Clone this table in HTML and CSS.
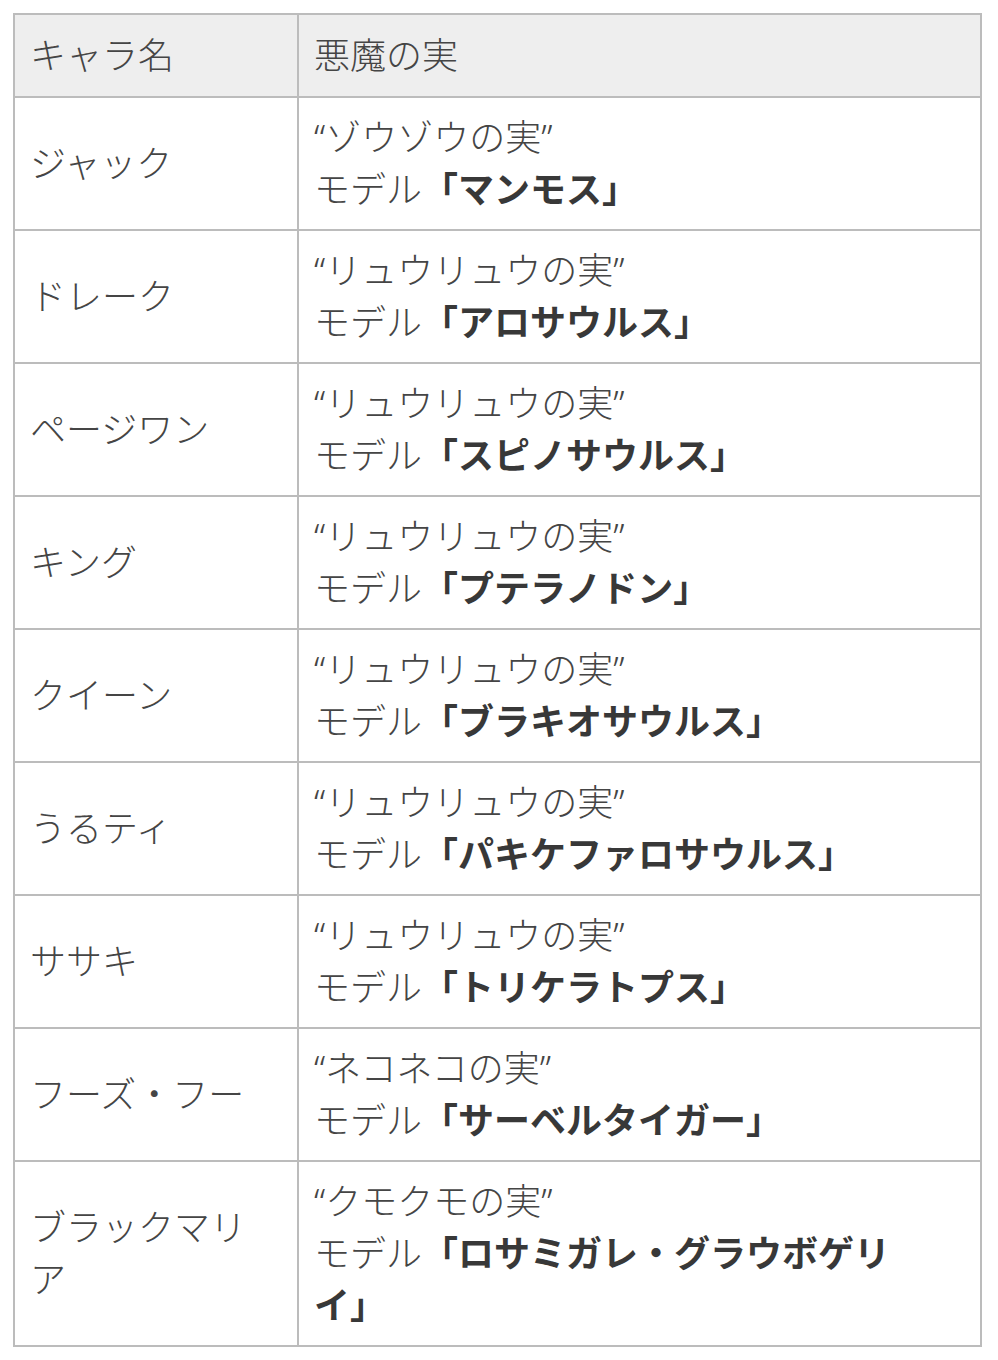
FILE: index.html
```html
<!DOCTYPE html>
<html lang="ja">
<head>
<meta charset="utf-8">
<title>悪魔の実</title>
<link rel="stylesheet" href="styles.css">
</head>
<body>
<div class="page">
<table class="fruit-table">
  <colgroup><col class="col-name"><col class="col-fruit"></colgroup>
  <thead>
    <tr><th>キャラ名</th><th>悪魔の実</th></tr>
  </thead>
  <tbody>
    <tr><td>ジャック</td><td>“ゾウゾウの実”<br>モデル<strong>「マンモス」</strong></td></tr>
    <tr><td>ドレーク</td><td>“リュウリュウの実”<br>モデル<strong>「アロサウルス」</strong></td></tr>
    <tr><td>ページワン</td><td>“リュウリュウの実”<br>モデル<strong>「スピノサウルス」</strong></td></tr>
    <tr><td>キング</td><td>“リュウリュウの実”<br>モデル<strong>「プテラノドン」</strong></td></tr>
    <tr><td>クイーン</td><td>“リュウリュウの実”<br>モデル<strong>「ブラキオサウルス」</strong></td></tr>
    <tr><td>うるティ</td><td>“リュウリュウの実”<br>モデル<strong>「パキケファロサウルス」</strong></td></tr>
    <tr><td>ササキ</td><td>“リュウリュウの実”<br>モデル<strong>「トリケラトプス」</strong></td></tr>
    <tr><td>フーズ・フー</td><td>“ネコネコの実”<br>モデル<strong>「サーベルタイガー」</strong></td></tr>
    <tr><td>ブラックマリア</td><td>“クモクモの実”<br>モデル<strong>「ロサミガレ・グラウボゲリイ」</strong></td></tr>
  </tbody>
</table>
</div>
</body>
</html>
```
FILE: styles.css
```css
html, body {
  margin: 0;
  padding: 0;
  background: #ffffff;
}
.page {
  padding: 13px 0 0 13px;
}
.fruit-table {
  border-collapse: collapse;
  width: 967px;
  table-layout: fixed;
  font-family: "Noto Sans", "Noto Sans CJK JP", sans-serif;
  font-size: 36px;
  line-height: 52px;
  color: #454545;
  text-spacing-trim: space-all;
}
.col-name { width: 284px; }
.col-fruit { width: 683px; }
.fruit-table th,
.fruit-table td {
  border: 2px solid #bcbcbc;
  text-align: left;
  vertical-align: middle;
  padding: 13.5px 20px 13.5px 15px;
  font-weight: 300;
  line-break: normal;
}
.fruit-table th {
  background: #eeeeee;
  padding-top: 14.5px;
  padding-bottom: 14.5px;
}
.fruit-table strong {
  font-weight: 700;
  color: #383838;
}
```
